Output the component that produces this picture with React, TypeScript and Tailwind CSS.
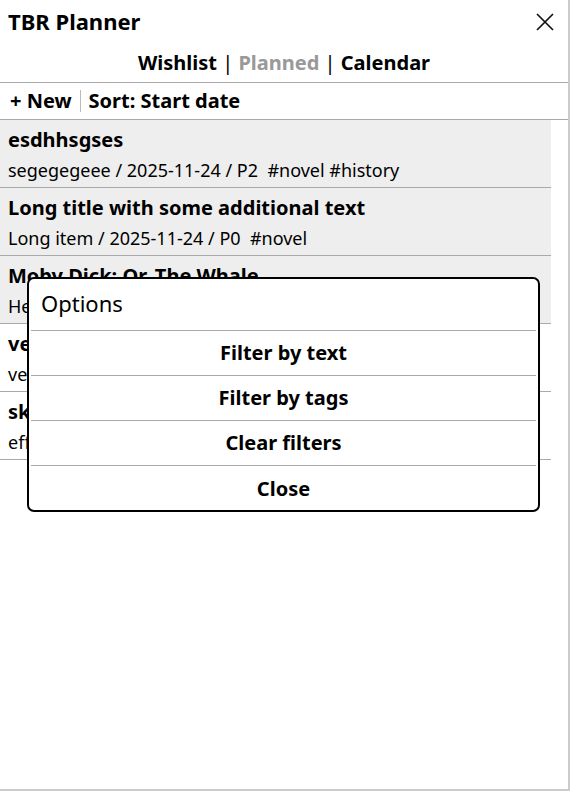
import React from "react";

type Book = {
  title: string;
  author: string;
  date: string;
  priority: string;
  tags: string[];
  shaded: boolean;
};

const books: Book[] = [
  { title: "esdhhsgses", author: "segegegeee", date: "2025-11-24", priority: "P2", tags: ["novel", "history"], shaded: true },
  { title: "Long title with some additional text", author: "Long item", date: "2025-11-24", priority: "P0", tags: ["novel"], shaded: true },
  { title: "Moby Dick: Or, The Whale", author: "Herman Melville", date: "2025-11-24", priority: "P1", tags: ["classic"], shaded: true },
  { title: "very short", author: "very", date: "2025-11-25", priority: "P1", tags: [], shaded: false },
  { title: "sketchbook", author: "effort", date: "2025-11-26", priority: "P3", tags: [], shaded: false },
];

const options = ["Filter by text", "Filter by tags", "Clear filters", "Close"];

function BookRow({ book }: { book: Book }) {
  return (
    <div className={`border-b border-[#aaaaaa] pl-[8px] pt-[5px] pb-[2px] ${book.shaded ? "bg-[#eeeeee]" : "bg-white"}`}>
      <div className="text-[20px] font-bold leading-[30px] whitespace-nowrap">{book.title}</div>
      <div className="text-[18px] leading-[30px] whitespace-pre">
        {`${book.author} / ${book.date} / ${book.priority}`}
        {book.tags.length > 0 ? "  " + book.tags.map((t) => "#" + t).join(" ") : ""}
      </div>
    </div>
  );
}

export default function App() {
  return (
    <div
      className="relative w-[570px] h-[791px] bg-white text-black border-r-2 border-b-2 border-[#cccccc] overflow-hidden"
      style={{ fontFamily: '"Noto Sans", "Open Sans", sans-serif' }}
    >
      {/* title bar */}
      <div className="h-[42px] flex items-center justify-between pl-[8px] pr-[14px]">
        <h1 className="text-[22px] font-bold leading-[42px]">TBR Planner</h1>
        <svg width="18" height="18" viewBox="0 0 18 18" className="mt-[1px]">
          <path d="M1 1 L17 17 M17 1 L1 17" stroke="#111" strokeWidth="1.7" fill="none" />
        </svg>
      </div>

      {/* tabs */}
      <div className="h-[41px] pt-[2px] border-b border-[#aaaaaa] flex justify-center text-[20px] font-bold leading-[38px] whitespace-pre">
        <span>Wishlist</span>
        <span className="font-normal"> | </span>
        <span className="text-[#999999]">Planned</span>
        <span className="font-normal"> | </span>
        <span>Calendar</span>
      </div>

      {/* toolbar */}
      <div className="h-[37px] pt-[2px] pb-[2px] border-b border-[#aaaaaa] flex items-center pl-[10px] text-[20px] font-bold leading-[32px]">
        <span>+ New</span>
        <span className="inline-block w-px h-[22px] bg-[#bbbbbb] mx-[8px]" />
        <span>Sort: Start date</span>
      </div>

      {/* list */}
      <div className="w-[551px]">
        {books.map((b) => (
          <BookRow key={b.title} book={b} />
        ))}
      </div>

      {/* options dialog */}
      <div className="absolute left-[27px] top-[277px] w-[513px] bg-white border-2 border-black rounded-[7px]">
        <div className="h-[51px] flex items-center pl-[12px] pb-[4px] text-[22px] leading-[30px]">Options</div>
        {options.map((o, i) => (
          <div
            key={o}
            className={`mx-[2px] border-t border-[#aaaaaa] flex items-center justify-center text-[20px] font-bold ${i === options.length - 1 ? "h-[45px] pt-[2px]" : "h-[45px]"}`}
          >
            {o}
          </div>
        ))}
      </div>
    </div>
  );
}
